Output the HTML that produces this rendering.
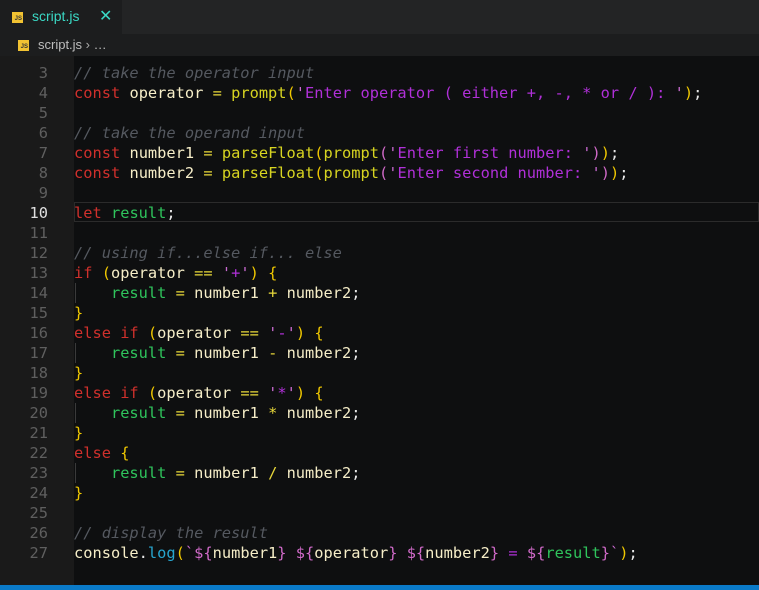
<!DOCTYPE html>
<html><head><meta charset="utf-8"><style>
body{margin:0;width:759px;height:590px;overflow:hidden;background:#0e0f10;font-family:"Liberation Sans",sans-serif;position:relative}
#tabs{position:absolute;left:0;top:0;width:759px;height:34px;background:#232425}
#tab{position:absolute;left:0;top:0;width:122px;height:34px;background:#1c1d1e}
.js{position:absolute;width:11px;height:11px;background:#f1c232;font:bold 6px "Liberation Sans",sans-serif;color:#333;text-align:right;line-height:15px;box-sizing:border-box;padding-right:1px}
#crumb{position:absolute;left:0;top:34px;width:759px;height:22px;background:#1c1d1e}
#gutter{position:absolute;left:0;top:56px;width:74px;height:530px;background:#1a1a1a}
#status{position:absolute;left:0;top:585px;width:759px;height:5px;background:#0a7ac8}
#code{position:absolute;left:0;top:57px;font:15.35px "DejaVu Sans Mono",monospace;}
.l{height:20px;line-height:20px;white-space:pre;position:relative}
.n{display:inline-block;width:48px;text-align:right;color:#5f5f5f;margin-right:26px}
.cur .n{color:#e0e0e0}
#hl{position:absolute;left:74px;top:202px;width:685px;height:20px;border:1px solid #2b2b2b;box-sizing:border-box}
.g{position:absolute;left:75px;width:1px;height:20px;background:#3a3a3a}
.k{color:#d0302c}.v{color:#f6eec8}.o{color:#e8d83a}.f{color:#d7d421}.s{color:#b030d8}.q{color:#c86ad0}
.c{color:#555960;font-style:italic}.r{color:#2fc45c}.p{color:#f0c800}.pp{color:#d06ac8}.lg{color:#27a6d0}.w{color:#e8e8e8}
</style></head><body>
<div id="tabs"><div id="tab">
<div class="js" style="left:12px;top:12px">JS</div>
<div style="position:absolute;left:32px;top:8px;font-size:14px;color:#3ad8c4">script.js</div>
<div style="position:absolute;left:99px;top:6px;font-size:16px;color:#3ad8c4">✕</div>
</div></div>
<div id="crumb">
<div class="js" style="left:18px;top:6px">JS</div>
<div style="position:absolute;left:38px;top:3px;font-size:13px;color:#bdbdbd">script.js <span style="color:#aaa">›</span> …</div>
</div>
<div id="gutter"></div>
<div id="hl"></div>
<div id="code">
<div class="l" style="height:6px;overflow:hidden"></div>
<div class="l"><span class="n">3</span><span class="c">// take the operator input</span></div>
<div class="l"><span class="n">4</span><span class="k">const</span> <span class="v">operator</span> <span class="o">=</span> <span class="f">prompt</span><span class="p">(</span><span class="q">'</span><span class="s">Enter operator ( either +, -, * or / ): </span><span class="q">'</span><span class="p">)</span><span class="w">;</span></div>
<div class="l"><span class="n">5</span></div>
<div class="l"><span class="n">6</span><span class="c">// take the operand input</span></div>
<div class="l"><span class="n">7</span><span class="k">const</span> <span class="v">number1</span> <span class="o">=</span> <span class="f">parseFloat</span><span class="p">(</span><span class="f">prompt</span><span class="pp">(</span><span class="q">'</span><span class="s">Enter first number: </span><span class="q">'</span><span class="pp">)</span><span class="p">)</span><span class="w">;</span></div>
<div class="l"><span class="n">8</span><span class="k">const</span> <span class="v">number2</span> <span class="o">=</span> <span class="f">parseFloat</span><span class="p">(</span><span class="f">prompt</span><span class="pp">(</span><span class="q">'</span><span class="s">Enter second number: </span><span class="q">'</span><span class="pp">)</span><span class="p">)</span><span class="w">;</span></div>
<div class="l"><span class="n">9</span></div>
<div class="l cur"><span class="n">10</span><span class="k">let</span> <span class="r">result</span><span class="w">;</span></div>
<div class="l"><span class="n">11</span></div>
<div class="l"><span class="n">12</span><span class="c">// using if...else if... else</span></div>
<div class="l"><span class="n">13</span><span class="k">if</span> <span class="p">(</span><span class="v">operator</span> <span class="o">==</span> <span class="q">'</span><span class="s">+</span><span class="q">'</span><span class="p">)</span> <span class="p">{</span></div>
<div class="l"><span class="g"></span><span class="n">14</span>    <span class="r">result</span> <span class="o">=</span> <span class="v">number1</span> <span class="o">+</span> <span class="v">number2</span><span class="w">;</span></div>
<div class="l"><span class="n">15</span><span class="p">}</span></div>
<div class="l"><span class="n">16</span><span class="k">else if</span> <span class="p">(</span><span class="v">operator</span> <span class="o">==</span> <span class="q">'</span><span class="s">-</span><span class="q">'</span><span class="p">)</span> <span class="p">{</span></div>
<div class="l"><span class="g"></span><span class="n">17</span>    <span class="r">result</span> <span class="o">=</span> <span class="v">number1</span> <span class="o">-</span> <span class="v">number2</span><span class="w">;</span></div>
<div class="l"><span class="n">18</span><span class="p">}</span></div>
<div class="l"><span class="n">19</span><span class="k">else if</span> <span class="p">(</span><span class="v">operator</span> <span class="o">==</span> <span class="q">'</span><span class="s">*</span><span class="q">'</span><span class="p">)</span> <span class="p">{</span></div>
<div class="l"><span class="g"></span><span class="n">20</span>    <span class="r">result</span> <span class="o">=</span> <span class="v">number1</span> <span class="o">*</span> <span class="v">number2</span><span class="w">;</span></div>
<div class="l"><span class="n">21</span><span class="p">}</span></div>
<div class="l"><span class="n">22</span><span class="k">else</span> <span class="p">{</span></div>
<div class="l"><span class="g"></span><span class="n">23</span>    <span class="r">result</span> <span class="o">=</span> <span class="v">number1</span> <span class="o">/</span> <span class="v">number2</span><span class="w">;</span></div>
<div class="l"><span class="n">24</span><span class="p">}</span></div>
<div class="l"><span class="n">25</span></div>
<div class="l"><span class="n">26</span><span class="c">// display the result</span></div>
<div class="l"><span class="n">27</span><span class="v">console</span><span class="w">.</span><span class="lg">log</span><span class="p">(</span><span class="q">`</span><span class="pp">${</span><span class="v">number1</span><span class="pp">}</span> <span class="pp">${</span><span class="v">operator</span><span class="pp">}</span> <span class="pp">${</span><span class="v">number2</span><span class="pp">}</span> <span class="s">=</span> <span class="pp">${</span><span class="r">result</span><span class="pp">}</span><span class="q">`</span><span class="p">)</span><span class="w">;</span></div>
</div>
<div id="status"></div>
</body></html>
